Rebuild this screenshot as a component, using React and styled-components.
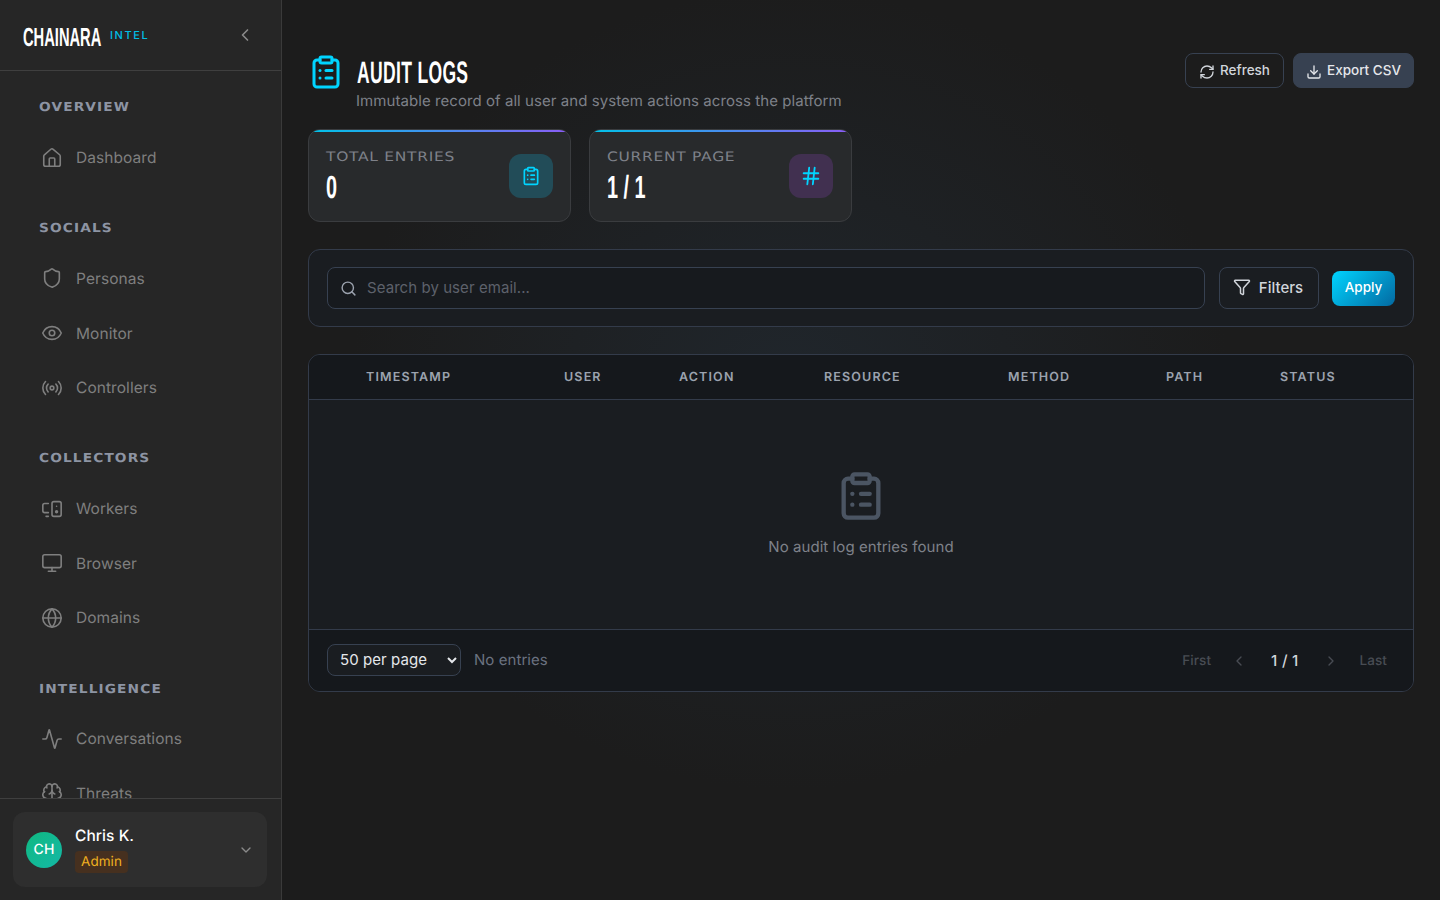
import React from "react";
import styled, { createGlobalStyle } from "styled-components";
import {
  Activity, Brain, ChevronDown, ChevronLeft, ChevronRight, ClipboardList, Download, Filter, Globe,
  Hash, House, Monitor, MonitorSpeaker, Eye, Radio, RefreshCw, Search, Shield,
} from "lucide-react";

const displayFont = `"Liberation Sans", sans-serif`;
const techFont = `"DejaVu Sans", sans-serif`;

const GlobalStyle = createGlobalStyle`
  html, body { margin: 0; padding: 0; height: 100%; background: #1c1c1c; }
  * { box-sizing: border-box; }
  body {
    font-family: Inter, "Liberation Sans", sans-serif;
    letter-spacing: 0.004em;
    overflow: hidden;
    text-rendering: geometricPrecision;
  }
`;

const Page = styled.div`
  display: flex;
  width: 1440px;
  height: 900px;
  background: radial-gradient(ellipse 440px 400px at 790px 390px, #20262c 0%, #1c1c1c 100%);
`;

const Sidebar = styled.aside`
  width: 282px;
  flex: none;
  height: 900px;
  display: flex;
  flex-direction: column;
  background: #262626;
  border-right: 1px solid #3a3a3a;
`;

const Brand = styled.div`
  height: 71px;
  flex: none;
  display: flex;
  align-items: center;
  padding: 0 26px 0 23px;
  border-bottom: 1px solid #3f3f3f;
`;

/* no condensed family is installed, so the display type is squeezed horizontally */
const Logo = styled.span`
  width: 79px;
  margin-top: 4px;
  font-family: ${displayFont};
  font-weight: 700;
  font-size: 26px;
  letter-spacing: 0;
  color: #fff;
  white-space: nowrap;
  transform: scaleX(0.565);
  transform-origin: left center;
`;

const LogoTag = styled.span`
  margin-left: 8px;
  font-size: 11px;
  font-weight: 500;
  letter-spacing: 1.6px;
  color: #00bfe8;
`;

const CollapseButton = styled.button`
  margin-left: auto;
  display: flex;
  padding: 0;
  border: 0;
  background: none;
  color: #8a8a8a;
`;

const Nav = styled.nav`
  flex: 1;
  min-height: 0;
  overflow-y: scroll;
  padding: 25.4px 0 433px 39px;

  &::-webkit-scrollbar { width: 8px; }
  &::-webkit-scrollbar-track { background: #1e293b; }
  &::-webkit-scrollbar-thumb { background: #475569; border-radius: 4px; }
`;

const NavSection = styled.div`
  margin-bottom: 32.4px;
`;

const SectionTitle = styled.div`
  height: 20px;
  margin-bottom: 13.8px;
  line-height: 22px;
  font-family: ${techFont};
  font-size: 12.5px;
  font-weight: 700;
  letter-spacing: 1px;
  color: #8d94a3;
  transform: scaleX(1.1);
  transform-origin: left center;
`;

const NavItem = styled.a`
  height: 54.67px;
  display: flex;
  align-items: center;
  gap: 13px;
  font-size: 15.5px;
  color: #7f7f7f;

  svg { flex: none; margin-left: 2px; }
`;

const UserArea = styled.div`
  flex: none;
  height: 102px;
  padding: 13px 14px 13px 13px;
  border-top: 1px solid #3f3f3f;
`;

const UserCard = styled.div`
  height: 75px;
  display: flex;
  align-items: center;
  padding: 0 13px;
  border-radius: 12px;
  background: #2e2e2e;
`;

const Avatar = styled.div`
  width: 36px;
  height: 36px;
  flex: none;
  display: flex;
  align-items: center;
  justify-content: center;
  border-radius: 50%;
  background: linear-gradient(135deg, #10b981, #14b8a6);
  color: #fff;
  font-size: 14px;
  font-weight: 500;
`;

const UserInfo = styled.div`
  margin-left: 13px;
  display: flex;
  flex-direction: column;
  align-items: flex-start;
  gap: 5px;
`;

const UserName = styled.div`
  font-size: 15.5px;
  font-weight: 500;
  line-height: 20px;
  color: #fff;
`;

const RoleBadge = styled.span`
  padding: 0 6px;
  height: 22px;
  line-height: 22px;
  border-radius: 4px;
  background: #46301f;
  color: #f0b020;
  font-size: 13.5px;
`;

const UserChevron = styled(ChevronDown)`
  margin-left: auto;
  color: #8a8a8a;
`;

const Main = styled.main`
  flex: 1;
  min-width: 0;
  padding: 53px 26px 0;
  display: flex;
  flex-direction: column;
`;

const PageHeader = styled.header`
  display: flex;
  justify-content: space-between;
  align-items: flex-start;
  height: 76px;
`;

const TitleGroup = styled.div`
  display: flex;
  gap: 12px;
`;

const TitleIcon = styled(ClipboardList)`
  color: #00d4ff;
  flex: none;
  margin-top: 1px;
`;

const Title = styled.h1`
  width: 112px;
  margin: 0 0 0 1px;
  padding-top: 2px;
  height: 38px;
  font-family: ${displayFont};
  font-size: 31px;
  font-weight: 700;
  line-height: 36px;
  letter-spacing: 0.6px;
  color: #fff;
  white-space: nowrap;
  transform: scaleX(0.565);
  transform-origin: left center;
`;

const Subtitle = styled.p`
  margin: 0;
  font-size: 15px;
  line-height: 20px;
  color: #7e8189;
`;

const HeaderActions = styled.div`
  display: flex;
  gap: 9px;
`;

const HeaderButton = styled.button`
  width: ${({ $solid }) => ($solid ? "121px" : "99px")};
  height: 35px;
  display: flex;
  align-items: center;
  justify-content: center;
  gap: 5px;
  padding: 0 0 2px;
  border-radius: 8px;
  border: 1px solid #374151;
  background: ${({ $solid }) => ($solid ? "#374151" : "transparent")};
  color: ${({ $solid }) => ($solid ? "#e5e7eb" : "#d1d5db")};
  font-family: inherit;
  font-size: 13.5px;
  font-weight: 500;
  letter-spacing: 0;

  svg { margin-top: 5px; }
`;

const StatRow = styled.div`
  display: flex;
  gap: 18px;
  margin-bottom: 27px;
`;

const StatCard = styled.div`
  position: relative;
  width: 263px;
  height: 93px;
  display: flex;
  align-items: center;
  justify-content: space-between;
  padding: 0 17px;
  overflow: hidden;
  border: 1px solid #3a3c3f;
  border-radius: 12px;
  background: #282a2c;

  &::before {
    content: "";
    position: absolute;
    top: 0;
    left: 0;
    right: 0;
    height: 2px;
    background: linear-gradient(90deg, #00c2e8, #8b5cf6);
  }
`;

const StatLabel = styled.div`
  margin-top: 2px;
  font-family: ${techFont};
  font-size: 13px;
  line-height: 18px;
  letter-spacing: 0.6px;
  color: #7e8189;
  white-space: nowrap;
  transform: scaleX(1.19);
  transform-origin: left center;
`;

const StatValue = styled.div`
  margin-top: 2px;
  font-family: ${displayFont};
  font-size: 32px;
  font-weight: 700;
  line-height: 36px;
  letter-spacing: 0;
  color: #fff;
  transform: scaleX(0.62);
  transform-origin: left center;
`;

const StatIcon = styled.div`
  width: 44px;
  height: 44px;
  margin-right: ${({ $purple }) => ($purple ? "1px" : "0")};
  display: flex;
  align-items: center;
  justify-content: center;
  border-radius: 12px;
  background: ${({ $purple }) => ($purple ? "#413050" : "#224c58")};
  color: #00d4ff;
`;

const FilterBar = styled.div`
  height: 78px;
  flex: none;
  display: flex;
  align-items: center;
  padding: 0 18px;
  border: 1px solid #333b4a;
  border-radius: 12px;
  background: #1a1d21;
  margin-bottom: 27px;
`;

const SearchBox = styled.div`
  flex: 1;
  height: 42px;
  display: flex;
  align-items: center;
  gap: 10px;
  padding: 0 12px;
  border: 1px solid #374151;
  border-radius: 8px;
  background: #171a1e;
  color: #9ca3af;
`;

const SearchInput = styled.input`
  flex: 1;
  border: 0;
  outline: 0;
  padding: 0 0 2px;
  background: transparent;
  font-family: inherit;
  font-size: 15px;
  letter-spacing: inherit;
  color: #fff;

  &::placeholder { color: #5d616b; }
`;

const FilterButton = styled.button`
  width: 100px;
  height: 42px;
  margin-left: 14px;
  padding: 0 2px 2px 0;
  display: flex;
  align-items: center;
  justify-content: center;
  gap: 8px;
  border: 1px solid #374151;
  border-radius: 8px;
  background: transparent;
  color: #d1d5db;
  font-family: inherit;
  font-size: 15px;
  font-weight: 500;
`;

const ApplyButton = styled.button`
  width: 63px;
  height: 35px;
  margin-left: 13px;
  padding: 0 0 2px;
  border: 0;
  border-radius: 8px;
  background: linear-gradient(135deg, #00d4ff, #0369a1);
  color: #fff;
  font-family: inherit;
  font-size: 13.5px;
  font-weight: 500;
`;

const TablePanel = styled.section`
  height: 338px;
  flex: none;
  display: flex;
  flex-direction: column;
  overflow: hidden;
  border: 1px solid #333b4a;
  border-radius: 12px;
  background: #1a1d21;
`;

const TableHead = styled.div`
  height: 45px;
  flex: none;
  display: grid;
  grid-template-columns: 57px 198px 115px 145px 184px 158px 114px 1fr;
  align-items: center;
  border-bottom: 1px solid #333b4a;
  background: #15181c;
`;

const HeadCell = styled.div`
  font-size: 12.5px;
  font-weight: 600;
  letter-spacing: 1.15px;
  color: #9ca3af;
`;

const EmptyState = styled.div`
  flex: 1;
  display: flex;
  flex-direction: column;
  align-items: center;
  padding-top: 70px;
  color: #7e8189;
  font-size: 15px;
  line-height: 20px;
`;

const EmptyIcon = styled(ClipboardList)`
  color: #4b5563;
  margin-bottom: 15px;
`;

const TableFooter = styled.div`
  height: 62px;
  flex: none;
  display: flex;
  align-items: center;
  padding: 0 26px 2px 18px;
  border-top: 1px solid #333b4a;
  background: #15181c;
`;

const PageSize = styled.select`
  width: 134px;
  height: 32px;
  padding: 0 8px;
  border: 1px solid #374151;
  border-radius: 8px;
  background: #1a1d21;
  color: #e5e7eb;
  font-family: inherit;
  font-size: 15px;
  letter-spacing: inherit;
`;

const EntryCount = styled.span`
  margin-left: 13px;
  color: #6b7280;
  font-size: 15px;
`;

const Pagination = styled.div`
  margin: 2px 0 0 auto;
  display: flex;
  align-items: center;
  color: #484c53;
`;

const PageLink = styled.span`
  font-size: 13.5px;
  font-weight: 500;
  color: #484c53;
`;

const PageArrow = styled.span`
  display: flex;
  margin: ${({ $side }) => ($side === "left" ? "0 24px 0 20px" : "0 21px 0 24px")};
`;

const PageNumber = styled.span`
  font-size: 15px;
  font-weight: 500;
  letter-spacing: 0.3px;
  color: #d1d5db;
`;

const sections = [
  { title: "OVERVIEW", items: [{ label: "Dashboard", Icon: House }] },
  {
    title: "SOCIALS",
    items: [
      { label: "Personas", Icon: Shield },
      { label: "Monitor", Icon: Eye },
      { label: "Controllers", Icon: Radio },
    ],
  },
  {
    title: "COLLECTORS",
    items: [
      { label: "Workers", Icon: MonitorSpeaker },
      { label: "Browser", Icon: Monitor },
      { label: "Domains", Icon: Globe },
    ],
  },
  {
    title: "INTELLIGENCE",
    items: [
      { label: "Conversations", Icon: Activity },
      { label: "Threats", Icon: Brain },
    ],
  },
];

const columns = ["TIMESTAMP", "USER", "ACTION", "RESOURCE", "METHOD", "PATH", "STATUS"];

const App = () => {
  return (
    <Page>
      <GlobalStyle />
      <Sidebar>
        <Brand>
          <Logo>CHAINARA</Logo>
          <LogoTag>INTEL</LogoTag>
          <CollapseButton><ChevronLeft size={20} /></CollapseButton>
        </Brand>
        <Nav>
          {sections.map((section) => (
            <NavSection key={section.title}>
              <SectionTitle>{section.title}</SectionTitle>
              {section.items.map(({ label, Icon }) => (
                <NavItem key={label}><Icon size={22} strokeWidth={1.75} />{label}</NavItem>
              ))}
            </NavSection>
          ))}
        </Nav>
        <UserArea>
          <UserCard>
            <Avatar>CH</Avatar>
            <UserInfo>
              <UserName>Chris K.</UserName>
              <RoleBadge>Admin</RoleBadge>
            </UserInfo>
            <UserChevron size={16} />
          </UserCard>
        </UserArea>
      </Sidebar>
      <Main>
        <PageHeader>
          <TitleGroup>
            <TitleIcon size={36} />
            <div>
              <Title>AUDIT LOGS</Title>
              <Subtitle>Immutable record of all user and system actions across the platform</Subtitle>
            </div>
          </TitleGroup>
          <HeaderActions>
            <HeaderButton><RefreshCw size={16} />Refresh</HeaderButton>
            <HeaderButton $solid><Download size={16} />Export CSV</HeaderButton>
          </HeaderActions>
        </PageHeader>
        <StatRow>
          <StatCard>
            <div>
              <StatLabel>TOTAL ENTRIES</StatLabel>
              <StatValue>0</StatValue>
            </div>
            <StatIcon><ClipboardList size={20} /></StatIcon>
          </StatCard>
          <StatCard>
            <div>
              <StatLabel>CURRENT PAGE</StatLabel>
              <StatValue>1 / 1</StatValue>
            </div>
            <StatIcon $purple><Hash size={22} /></StatIcon>
          </StatCard>
        </StatRow>
        <FilterBar>
          <SearchBox>
            <Search size={17} />
            <SearchInput placeholder="Search by user email..." />
          </SearchBox>
          <FilterButton><Filter size={18} />Filters</FilterButton>
          <ApplyButton>Apply</ApplyButton>
        </FilterBar>
        <TablePanel>
          <TableHead>
            <span />
            {columns.map((column) => <HeadCell key={column}>{column}</HeadCell>)}
          </TableHead>
          <EmptyState>
            <EmptyIcon size={52} />
            No audit log entries found
          </EmptyState>
          <TableFooter>
            <PageSize defaultValue="50">
              <option value="50">50 per page</option>
            </PageSize>
            <EntryCount>No entries</EntryCount>
            <Pagination>
              <PageLink>First</PageLink>
              <PageArrow $side="left"><ChevronLeft size={16} /></PageArrow>
              <PageNumber>1 / 1</PageNumber>
              <PageArrow $side="right"><ChevronRight size={16} /></PageArrow>
              <PageLink>Last</PageLink>
            </Pagination>
          </TableFooter>
        </TablePanel>
      </Main>
    </Page>
  );
};

export default App;
